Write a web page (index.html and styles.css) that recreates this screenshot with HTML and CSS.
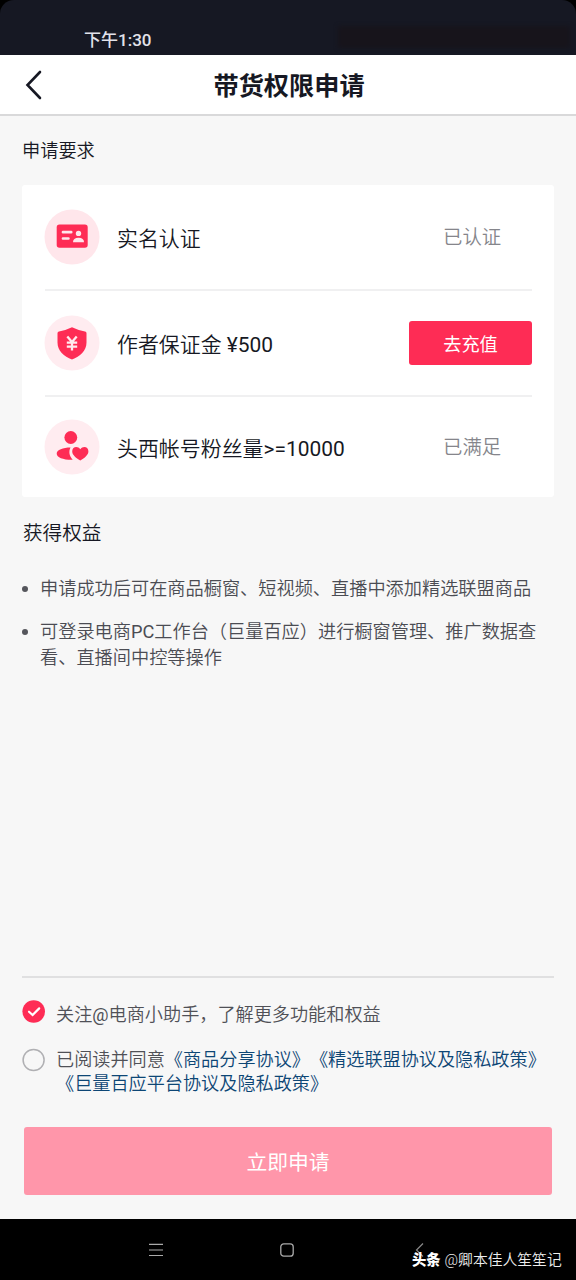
FILE: index.html
```html
<!DOCTYPE html>
<html lang="zh-CN">
<head>
<meta charset="utf-8">
<title>带货权限申请</title>
<link rel="stylesheet" href="styles.css">
</head>
<body>
<div class="screen">
  <div class="status"><span class="time">下午1:30</span><span class="smudge"></span></div>
  <header class="header">
    <svg class="back" width="20" height="32" viewBox="0 0 20 32"><path d="M16 3 3.500 16 16 29" fill="none" stroke="#161823" stroke-width="2.600" stroke-linecap="round"/></svg>
    <h1 class="title">带货权限申请</h1>
  </header>
  <main class="main">
    <h2 class="section-title">申请要求</h2>
    <section class="card">
      <div class="row">
        <svg class="icon" width="56" height="56" viewBox="0 0 56 56"><circle cx="28" cy="28" r="27.500" fill="#ffe6eb"/><rect x="12.700" y="15.600" width="31" height="23.200" rx="2.800" fill="#fe2c55"/><path d="M19 23.200h8.200M19 29.500h5.400" stroke="#ffe6eb" stroke-width="2.700" stroke-linecap="round"/><circle cx="34.500" cy="24.400" r="2.700" fill="#ffe6eb"/><path d="M29 33.300q0-4.600 5.500-4.600t5.500 4.600z" fill="#ffe6eb"/></svg>
        <span class="label">实名认证</span><span class="state">已认证</span>
      </div>
      <div class="row">
        <svg class="icon" width="56" height="56" viewBox="0 0 56 56"><circle cx="28" cy="28" r="27.500" fill="#ffecf0"/><path d="M28 12.300q6.500 3.200 13 4.200 1.500.3 1.500 1.800v9.200C42.500 36 36 41.500 28 44.500c-8-3-14.500-8.500-14.500-17v-9.200q0-1.500 1.500-1.800 6.500-1 13-4.200z" fill="#fe2c55"/><path d="m23.300 21.500 4.700 5.500 4.700-5.500M28 27v8.500M22.800 27.700h10.400M22.800 31.700h10.400" fill="none" stroke="#ffecf0" stroke-width="2.300"/></svg>
        <span class="label">作者保证金 <span class="latin">¥500</span></span><button class="pay">去充值</button>
      </div>
      <div class="row last">
        <svg class="icon" width="56" height="56" viewBox="0 0 56 56"><circle cx="28" cy="28" r="27.500" fill="#ffecf0"/><circle cx="26.800" cy="18.500" r="6.400" fill="#fe2c55"/><path d="M26.500 28.500c-7.500 0-13.800 2.500-13.800 6 0 4.100 6.800 6.500 16 6.300-3.500-4-4.200-8.200-2.200-12.300z" fill="#fe2c55"/><path d="M36.300 41.500c-4.500-2.800-8.100-5.500-8.100-9.300 0-4.800 5.700-5.700 8.100-2 2.400-3.700 8.100-2.800 8.100 2 0 3.800-3.600 6.500-8.100 9.300z" fill="#fe2c55"/></svg>
        <span class="label">头西帐号粉丝量<span class="latin">&gt;=10000</span></span><span class="state">已满足</span>
      </div>
    </section>
    <h2 class="section-title benefits-title">获得权益</h2>
    <ul class="benefits">
      <li>申请成功后可在商品橱窗、短视频、直播中添加精选联盟商品</li>
      <li>可登录电商<span class="latin">PC</span>工作台（巨量百应）进行橱窗管理、推广数据查<br>看、直播间中控等操作</li>
    </ul>
  </main>
  <footer class="footer">
    <div class="option follow">
      <svg class="check" width="24" height="24" viewBox="0 0 24 24"><circle cx="11.700" cy="11.500" r="11.300" fill="#fe2c55"/><path d="m7 11.700 3.600 3.300 6.600-6.600" fill="none" stroke="#fff" stroke-width="2.200" stroke-linecap="round"/></svg>
      <span class="text">关注<span class="latin">@</span>电商小助手，了解更多功能和权益</span>
    </div>
    <div class="option agree">
      <svg class="check" width="24" height="24" viewBox="0 0 24 24"><circle cx="11.600" cy="12" r="10.500" fill="none" stroke="#b0b0b3" stroke-width="1.500"/></svg>
      <span class="text">已阅读并同意<a class="link">《商品分享协议》《精选联盟协议及隐私政策》<br>《巨量百应平台协议及隐私政策》</a></span>
    </div>
    <button class="apply">立即申请</button>
  </footer>
  <nav class="nav">
    <svg class="menu" width="14" height="14" viewBox="0 0 14 14"><path d="M0 1.300h14M0 7h14M0 12.500h14" stroke="#aaa" stroke-width="1.200"/></svg>
    <svg class="home" width="14" height="14" viewBox="0 0 14 14"><rect x=".8" y=".8" width="12.400" height="12.400" rx="3" fill="none" stroke="#aaa" stroke-width="1.300"/></svg>
    <svg class="nav-back" width="9" height="14" viewBox="0 0 9 14"><path d="M8 .5 1.500 7 8 13.500" fill="none" stroke="#888" stroke-width="1.200"/></svg>
    <div class="watermark"><b class="brand">头条</b><span>@卿本佳人笙笙记</span></div>
  </nav>
</div>
</body>
</html>
```
FILE: styles.css
```css
* { box-sizing: border-box; }
body { margin: 0; background: #000; font-family: Roboto, "Noto Sans CJK SC", sans-serif; font-weight: 350; color: #161823; text-spacing-trim: space-all; }
h1, h2, ul { margin: 0; padding: 0; font-weight: inherit; }
button { border: 0; padding: 0; font-family: inherit; font-weight: 400; color: #fff; }
svg { display: block; flex: none; }
.latin { font-weight: 400; }
.screen { width: 576px; height: 1280px; display: flex; flex-direction: column; background: #f7f7f7; overflow: hidden; }
.status { height: 55px; flex: none; display: flex; justify-content: space-between; padding: 26px 6px 0 84px; background: #161823; border-radius: 14px 14px 0 0; box-shadow: 0 -14px 0 14px #000; clip-path: inset(0); }
.time { font-size: 17px; line-height: 29px; font-weight: 500; color: #e2e2ea; }
.smudge { width: 232px; height: 22px; background: #17141b; filter: blur(2px); }
.header { height: 61px; flex: none; display: flex; align-items: center; background: #fff; border-bottom: 2px solid #d9d9da; padding-left: 24px; }
.title { flex: 1; margin-right: 42px; padding-top: 5px; text-align: center; font-size: 25.200px; line-height: 36px; font-weight: 700; }
.main { flex: 1; padding: 21px 22px 0 22px; }
.section-title { font-size: 18.200px; line-height: 28px; }
.card { margin-top: 20px; height: 312px; padding: 0 22px 0 23px; background: #fff; border-radius: 3px; }
.row { height: 106px; display: flex; align-items: center; border-bottom: 2px solid #f0f0f1; }
.row.last { height: 100px; border: 0; }
.icon { margin-left: -1px; }
.label { margin-left: 17px; padding-top: 4px; flex: 1; font-size: 20.950px; line-height: 30px; }
.state { width: 123px; padding: 2px 0 0 34px; font-size: 19.400px; line-height: 30px; color: #85858b; }
.pay { width: 123px; height: 44px; border-radius: 3px; background: #fe2c55; font-size: 18.200px; }
.benefits-title { margin-top: 22px; padding-left: 1px; font-size: 19.600px; line-height: 30px; }
.benefits { list-style: none; margin-top: 27px; color: #4b4c53; font-size: 18.200px; line-height: 26px; }
.benefits li { position: relative; padding-left: 18px; margin-bottom: 17px; white-space: nowrap; }
.benefits li::before { content: ""; position: absolute; left: 0; top: 10px; width: 6px; height: 6px; border-radius: 50%; background: #55565c; }
.footer { height: 243px; flex: none; margin: 0 22px; border-top: 2px solid #e0e0e1; padding-top: 22px; }
.option { display: flex; gap: 10px; font-size: 18.150px; line-height: 24px; color: #505157; white-space: nowrap; }
.text { padding-top: 3px; }
.agree { margin-top: 21px; line-height: 23.500px; }
.agree .text { padding-top: 0; }
.link { color: #0d4675; }
.apply { display: block; width: 528px; height: 68px; margin: 32px 0 0 2px; border-radius: 3px; background: #ff96aa; font-size: 20.800px; }
.nav { height: 61px; flex: none; display: flex; background: #000; position: relative; padding: 24px 0 0 149px; }
.home { margin-left: 117px; }
.nav-back { margin-left: 121px; }
.watermark { position: absolute; left: 412px; top: 29px; display: flex; gap: 4px; font-size: 14.800px; line-height: 24px; color: #eee; white-space: nowrap; }
.brand { font-weight: 900; font-size: 14.300px; color: #fff; }
```
